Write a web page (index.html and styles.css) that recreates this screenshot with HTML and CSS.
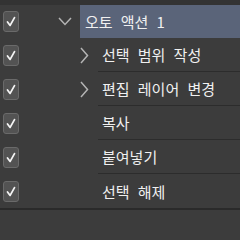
FILE: index.html
```html
<!DOCTYPE html>
<html lang="ko">
<head>
  <meta charset="UTF-8">
  <title>Auto Actions</title>
  <link rel="stylesheet" href="styles.css">
</head>
<body>

  <div class="top-strip"></div>

  <!-- Action list -->
  <div class="action-list">

    <div class="row row-set">
      <div class="check-cell"><span class="check"><svg viewBox="0 0 16 21"><path d="M4 11 L7 15 L12 6"/></svg></span></div>
      <div class="toggle toggle-down"><svg viewBox="0 0 14 9"><path d="M1 1 L7 7.5 L13 1"/></svg></div>
      <div class="label label-set">오토 액션 1</div>
    </div>

    <div class="row">
      <div class="check-cell"><span class="check"><svg viewBox="0 0 16 21"><path d="M4 11 L7 15 L12 6"/></svg></span></div>
      <div class="toggle toggle-right"><svg viewBox="0 0 9 17"><path d="M1 1 L7.5 8.5 L1 16"/></svg></div>
      <div class="label">선택 범위 작성</div>
    </div>

    <div class="row">
      <div class="check-cell"><span class="check"><svg viewBox="0 0 16 21"><path d="M4 11 L7 15 L12 6"/></svg></span></div>
      <div class="toggle toggle-right"><svg viewBox="0 0 9 17"><path d="M1 1 L7.5 8.5 L1 16"/></svg></div>
      <div class="label">편집 레이어 변경</div>
    </div>

    <div class="row">
      <div class="check-cell"><span class="check"><svg viewBox="0 0 16 21"><path d="M4 11 L7 15 L12 6"/></svg></span></div>
      <div class="toggle toggle-right"></div>
      <div class="label">복사</div>
    </div>

    <div class="row">
      <div class="check-cell"><span class="check"><svg viewBox="0 0 16 21"><path d="M4 11 L7 15 L12 6"/></svg></span></div>
      <div class="toggle toggle-right"></div>
      <div class="label">붙여넣기</div>
    </div>

    <div class="row">
      <div class="check-cell"><span class="check"><svg viewBox="0 0 16 21"><path d="M4 11 L7 15 L12 6"/></svg></span></div>
      <div class="toggle toggle-right"></div>
      <div class="label label-last">선택 해제</div>
    </div>

  </div>

</body>
</html>
```

FILE: styles.css
```css
body {
  margin: 0;
  background-color: #3c3c3c;
  color: #f0f0f0;
  font-family: "Noto Sans CJK KR", "Noto Sans", sans-serif;
  font-size: 15px;
  width: 240px;
  height: 240px;
  overflow: hidden;
}
.top-strip {
  height: 5px;
  background-color: #333333;
}
.action-list {
  border-bottom: 2px solid #2a2a2a;
}
.row {
  display: flex;
  align-items: stretch;
  height: 34px;
}
.row-set {
  height: 33px;
}
.check-cell {
  width: 58px;
  display: flex;
  align-items: center;
  padding-left: 3px;
  box-sizing: border-box;
}
.check {
  width: 16px;
  height: 21px;
  box-sizing: border-box;
  border: 1px solid #6a6a6a;
  border-radius: 3px;
  background-color: #535353;
  display: block;
}
.check svg {
  display: block;
  width: 14px;
  height: 19px;
}
.check path {
  fill: none;
  stroke: #f4f4f4;
  stroke-width: 2;
  stroke-linecap: round;
  stroke-linejoin: round;
}
.toggle {
  display: flex;
  align-items: center;
}
.toggle path {
  fill: none;
  stroke: #b4b4b4;
  stroke-width: 1.5;
}
.toggle-down {
  width: 22px;
}
.toggle-down svg {
  width: 14px;
  height: 9px;
}
.toggle-right {
  width: 18px;
  margin-left: 22px;
}
.toggle-right svg {
  width: 9px;
  height: 17px;
}
.label {
  flex: 1;
  display: flex;
  align-items: center;
  padding-left: 4px;
  border-bottom: 1px solid #2c2c2c;
  word-spacing: 4px;
  white-space: nowrap;
}
.label-set {
  background-color: #5a6479;
  padding-left: 5px;
  border-bottom: none;
}
.label-last {
  border-bottom: none;
}
```
